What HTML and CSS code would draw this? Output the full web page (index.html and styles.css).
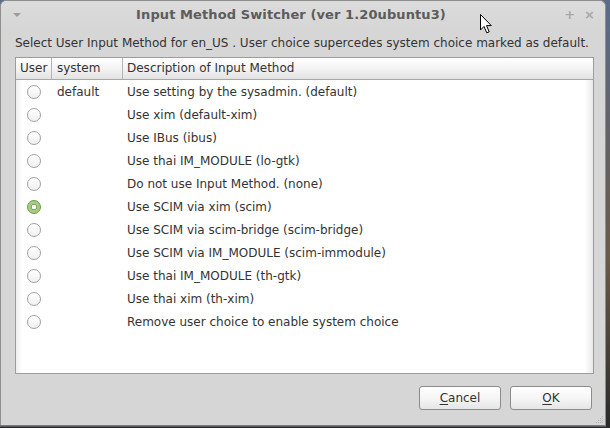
FILE: index.html
```html
<!DOCTYPE html>
<html>
<head>
<meta charset="utf-8">
<link rel="stylesheet" href="styles.css">
</head>
<body>
<div class="desktop">
  <div class="window">
    <div class="titlebar">
      <div class="tb-left"><span class="menu-arrow"></span></div>
      <div class="title">Input Method Switcher (ver 1.20ubuntu3)</div>
      <div class="tb-right"><span class="tb-btn">+</span><span class="tb-btn close">×</span></div>
    </div>
    <div class="body">
      <div class="label">Select User Input Method for en_US . User choice supercedes system choice marked as default.</div>
      <div class="tree">
        <div class="thead">
          <div class="c-user">User</div>
          <div class="c-sys">system</div>
          <div class="c-desc">Description of Input Method</div>
        </div>
        <div class="rows">
          <div class="row"><div class="c-user"><span class="radio"></span></div><div class="c-sys">default</div><div class="c-desc">Use setting by the sysadmin. (default)</div></div>
          <div class="row"><div class="c-user"><span class="radio"></span></div><div class="c-sys"></div><div class="c-desc">Use xim (default-xim)</div></div>
          <div class="row"><div class="c-user"><span class="radio"></span></div><div class="c-sys"></div><div class="c-desc">Use IBus (ibus)</div></div>
          <div class="row"><div class="c-user"><span class="radio"></span></div><div class="c-sys"></div><div class="c-desc">Use thai IM_MODULE (lo-gtk)</div></div>
          <div class="row"><div class="c-user"><span class="radio"></span></div><div class="c-sys"></div><div class="c-desc">Do not use Input Method. (none)</div></div>
          <div class="row"><div class="c-user"><span class="radio on"></span></div><div class="c-sys"></div><div class="c-desc">Use SCIM via xim (scim)</div></div>
          <div class="row"><div class="c-user"><span class="radio"></span></div><div class="c-sys"></div><div class="c-desc">Use SCIM via scim-bridge (scim-bridge)</div></div>
          <div class="row"><div class="c-user"><span class="radio"></span></div><div class="c-sys"></div><div class="c-desc">Use SCIM via IM_MODULE (scim-immodule)</div></div>
          <div class="row"><div class="c-user"><span class="radio"></span></div><div class="c-sys"></div><div class="c-desc">Use thai IM_MODULE (th-gtk)</div></div>
          <div class="row"><div class="c-user"><span class="radio"></span></div><div class="c-sys"></div><div class="c-desc">Use thai xim (th-xim)</div></div>
          <div class="row"><div class="c-user"><span class="radio"></span></div><div class="c-sys"></div><div class="c-desc">Remove user choice to enable system choice</div></div>
        </div>
      </div>
      <div class="buttons">
        <button class="btn"><u>C</u>ancel</button>
        <button class="btn"><u>O</u>K</button>
      </div>
    </div>
    <svg class="grip" width="10" height="10" viewBox="0 0 10 10">
      <g fill="#b4b4b4">
        <rect x="8" y="2" width="1" height="1"/>
        <rect x="6" y="4" width="1" height="1"/><rect x="8" y="4" width="1" height="1"/>
        <rect x="4" y="6" width="1" height="1"/><rect x="6" y="6" width="1" height="1"/><rect x="8" y="6" width="1" height="1"/>
        <rect x="2" y="8" width="1" height="1"/><rect x="4" y="8" width="1" height="1"/><rect x="6" y="8" width="1" height="1"/><rect x="8" y="8" width="1" height="1"/>
      </g>
    </svg>
  </div>
  <svg class="cursor" width="14" height="22" viewBox="0 0 14 22">
    <path d="M1.5 1.5 L1.5 17 L5 13.5 L7.8 19.8 L10.2 18.8 L7.5 12.6 L12.3 12.6 Z" fill="#fff" stroke="#000" stroke-width="1" stroke-linejoin="miter"/>
  </svg>
</div>
</body>
</html>
```

FILE: styles.css
```css
html, body {
  margin: 0;
  padding: 0;
}
body {
  width: 610px;
  height: 428px;
  overflow: hidden;
  background: #2e3036;
  font-family: "DejaVu Sans", "Liberation Sans", sans-serif;
}
.desktop {
  position: relative;
  width: 610px;
  height: 428px;
  background: linear-gradient(180deg, #5a6c8a 0%, #6b5a48 60%, #2a2a2a 100%);
}
.window {
  position: relative;
  width: 606px;
  height: 426px;
  box-sizing: border-box;
  background: #d6d6d6;
  border: 1px solid #8e8e8e;
  border-bottom-color: #7a7a7a;
  border-radius: 6px 6px 0 0;
  display: flex;
  flex-direction: column;
  box-shadow: 0 1px 0 #55585e;
}
.titlebar {
  height: 27px;
  display: flex;
  align-items: center;
  background: linear-gradient(180deg, #dcdcdc, #d6d6d6);
  border-radius: 6px 6px 0 0;
}
.tb-left {
  width: 36px;
  padding-left: 12px;
  box-sizing: border-box;
  display: flex;
  align-items: center;
}
.menu-arrow {
  width: 0;
  height: 0;
  border-left: 4px solid transparent;
  border-right: 4px solid transparent;
  border-top: 4px solid #9c9c9c;
  margin-top: 1px;
}
.title {
  flex: 1;
  text-align: center;
  font-weight: bold;
  font-size: 13px;
  color: #5c5c5c;
  letter-spacing: 0.1px;
  padding-right: 4px;
}
.tb-right {
  width: 56px;
  display: flex;
  gap: 9px;
  padding-right: 10px;
  box-sizing: border-box;
  justify-content: flex-end;
}
.tb-btn {
  color: #a8a8a8;
  font-size: 13px;
  font-weight: bold;
  line-height: 14px;
}
.body {
  flex: 1;
  display: flex;
  flex-direction: column;
  padding: 0 11px 0 14px;
}
.label {
  font-size: 12px;
  color: #333;
  height: 15px;
  line-height: 15px;
  margin-top: 8px;
  white-space: nowrap;
}
.tree {
  margin-top: 6px;
  height: 317px;
  box-sizing: border-box;
  border: 1px solid #9c9c9c;
  background: #fff;
  display: flex;
  flex-direction: column;
  font-size: 12px;
  color: #333;
}
.thead {
  display: flex;
  height: 21px;
  border-bottom: 1px solid #a8a8a8;
  background: linear-gradient(180deg, #ffffff 0%, #f4f4f4 50%, #e2e2e2 100%);
}
.thead > div {
  line-height: 21px;
  border-right: 1px solid #b4b4b4;
  box-sizing: border-box;
}
.thead .c-desc {
  border-right: none;
}
.c-user {
  width: 36px;
  padding-left: 4px;
  box-sizing: border-box;
  flex: none;
}
.c-sys {
  width: 71px;
  padding-left: 5px;
  box-sizing: border-box;
  flex: none;
}
.c-desc {
  flex: 1;
  padding-left: 4px;
}
.rows {
  flex: 1;
  background: linear-gradient(90deg, #eeeeee 0px, #ffffff 6px, #ffffff calc(100% - 8px), #e8e8e8 100%);
}
.row {
  display: flex;
  height: 23px;
  align-items: center;
}
.row .c-user {
  display: flex;
  justify-content: center;
  padding-left: 0;
}
.radio {
  width: 12px;
  height: 12px;
  border-radius: 50%;
  border: 1px solid #a2a2a2;
  background: linear-gradient(180deg, #ffffff, #f0f0f0);
  box-sizing: content-box;
  position: relative;
}
.radio.on {
  border-color: #6f9a4c;
  background: radial-gradient(circle, #ffffff 0 2px, #7ea85a 2.5px 3px, #a6cc82 3.5px 100%);
}
.buttons {
  display: flex;
  justify-content: flex-end;
  gap: 9px;
  margin-top: 12px;
  padding-right: 2px;
}
.btn {
  width: 82px;
  height: 24px;
  box-sizing: border-box;
  border: 1px solid #8c8c8c;
  border-radius: 3px;
  background: linear-gradient(180deg, #ffffff 0%, #f6f6f6 50%, #e6e6e6 100%);
  font-family: "DejaVu Sans", "Liberation Sans", sans-serif;
  font-size: 12px;
  color: #333;
  padding: 0;
}
.btn u {
  text-decoration-thickness: 1px;
  text-underline-offset: 2px;
}
.grip {
  position: absolute;
  right: 1px;
  bottom: 1px;
}
.cursor {
  position: absolute;
  left: 479px;
  top: 13px;
}
```
